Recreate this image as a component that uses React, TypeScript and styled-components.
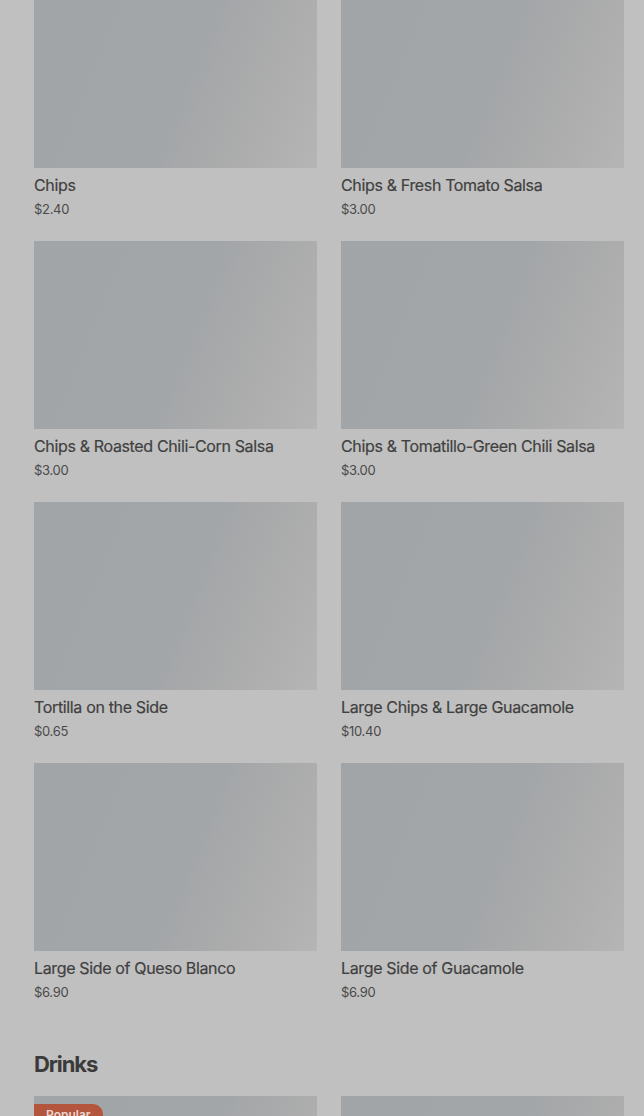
import styled, { createGlobalStyle } from "styled-components";

const GlobalStyle = createGlobalStyle`
  html, body {
    margin: 0;
    padding: 0;
    background: #c0c0c0;
    font-family: Inter, "Liberation Sans", Arial, sans-serif;
  }
`;

const Page = styled.div`
  width: 644px;
  height: 1116px;
  overflow: hidden;
  background: #c0c0c0;
`;

const Content = styled.div`
  margin-top: -20px;
  padding: 0 20px 0 34px;
`;

const Grid = styled.div`
  display: grid;
  grid-template-columns: repeat(2, 283px);
  column-gap: 24px;
  row-gap: 23px;
`;

const Card = styled.div`
  display: flex;
  flex-direction: column;
`;

const Thumb = styled.div`
  position: relative;
  height: 188px;
  background: linear-gradient(
    112deg,
    #a2a5a8 0%,
    #a3a6a9 54%,
    #a8a9aa 66%,
    #afafaf 84%,
    #b5b5b5 100%
  );
`;

const Title = styled.div`
  margin-top: 7px;
  font-size: 16px;
  line-height: 20px;
  font-weight: 400;
  color: #404040;
  letter-spacing: -0.35px;
  -webkit-text-stroke: 0.2px #404040;
`;

const Price = styled.div`
  margin-top: 5px;
  font-size: 13px;
  line-height: 18px;
  color: #4a4a4a;
  letter-spacing: -0.3px;
`;

const Heading = styled.h2`
  margin: 48px 0 17px;
  font-size: 22px;
  line-height: 30px;
  font-weight: 700;
  color: #3a3a3a;
  letter-spacing: -1.1px;
`;

const Badge = styled.span`
  position: absolute;
  top: 8px;
  left: 0;
  padding: 3px 12px;
  background: #b4553d;
  color: #e9d6cf;
  font-size: 12px;
  line-height: 16px;
  font-weight: 600;
  border-radius: 0 10px 10px 0;
`;

type Item = { name: string; price: string };

const sides: Item[] = [
  { name: "Chips", price: "$2.40" },
  { name: "Chips & Fresh Tomato Salsa", price: "$3.00" },
  { name: "Chips & Roasted Chili-Corn Salsa", price: "$3.00" },
  { name: "Chips & Tomatillo-Green Chili Salsa", price: "$3.00" },
  { name: "Tortilla on the Side", price: "$0.65" },
  { name: "Large Chips & Large Guacamole", price: "$10.40" },
  { name: "Large Side of Queso Blanco", price: "$6.90" },
  { name: "Large Side of Guacamole", price: "$6.90" },
];

export default function App() {
  return (
    <Page>
      <GlobalStyle />
      <Content>
        <Grid>
          {sides.map((item) => (
            <Card key={item.name}>
              <Thumb />
              <Title>{item.name}</Title>
              <Price>{item.price}</Price>
            </Card>
          ))}
        </Grid>
        <Heading>Drinks</Heading>
        <Grid>
          <Card>
            <Thumb>
              <Badge>Popular</Badge>
            </Thumb>
          </Card>
          <Card>
            <Thumb />
          </Card>
        </Grid>
      </Content>
    </Page>
  );
}
